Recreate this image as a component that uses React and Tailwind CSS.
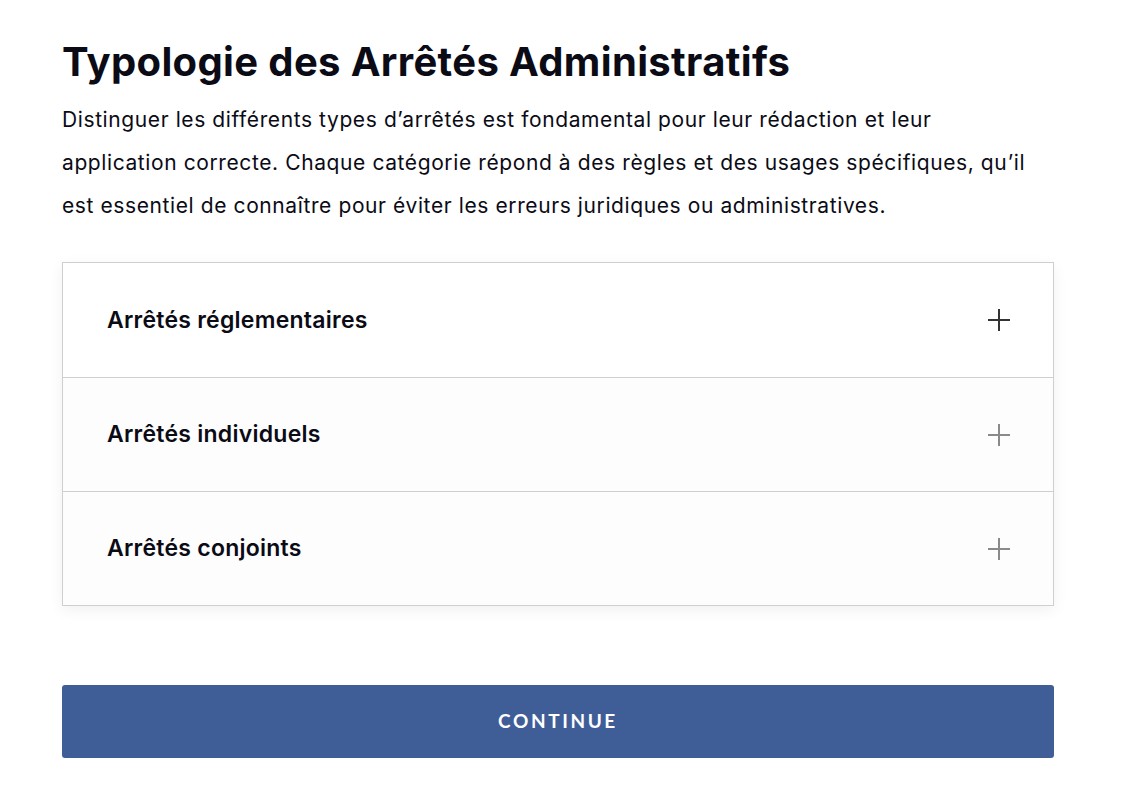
import { useState } from "react";

const items = [
  { id: 1, title: "Arrêtés réglementaires" },
  { id: 2, title: "Arrêtés individuels" },
  { id: 3, title: "Arrêtés conjoints" },
];

function PlusIcon({ dark }) {
  return (
    <svg width="22" height="22" viewBox="0 0 22 22" className={dark ? "text-[#333]" : "text-[#8a8a8a]"}>
      <path d="M11 0v22M0 11h22" stroke="currentColor" strokeWidth="2" />
    </svg>
  );
}

export default function App() {
  const [open, setOpen] = useState(null);

  return (
    <div className="min-h-[800px] bg-white font-['Inter',sans-serif] text-[#0b0b16]">
      <div className="ml-[62px] w-[992px] pt-[38px]">
        <h1 className="text-[40px] font-bold leading-[48px] tracking-[0.35px]">
          Typologie des Arrêtés Administratifs
        </h1>
        <p className="mt-[12px] text-[21px] leading-[43px] tracking-[0.6px]">
          Distinguer les différents types d’arrêtés est fondamental pour leur rédaction et leur
          <br />
          application correcte. Chaque catégorie répond à des règles et des usages spécifiques, qu’il
          <br />
          est essentiel de connaître pour éviter les erreurs juridiques ou administratives.
        </p>

        <div className="mt-[35px] border border-[#cfcfcf] bg-white shadow-[0_4px_14px_rgba(0,0,0,0.06)]">
          {items.map((item, i) => (
            <button
              key={item.id}
              type="button"
              onClick={() => setOpen(open === item.id ? null : item.id)}
              className={`flex h-[114px] w-full items-center justify-between pl-[44px] pr-[43px] text-left ${
                i > 0 ? "border-t border-[#cfcfcf] bg-[#fdfdfd]" : ""
              }`}
            >
              <span className="text-[23px] font-semibold tracking-[0.25px]">{item.title}</span>
              <PlusIcon dark={i === 0} />
            </button>
          ))}
        </div>

        <button
          type="button"
          className="mt-[79px] flex h-[73px] w-full items-center justify-center rounded-[3px] bg-[#3f5e98] font-['Lato',sans-serif] text-[19px] font-bold tracking-[2.6px] text-white"
        >
          CONTINUE
        </button>
      </div>
    </div>
  );
}
